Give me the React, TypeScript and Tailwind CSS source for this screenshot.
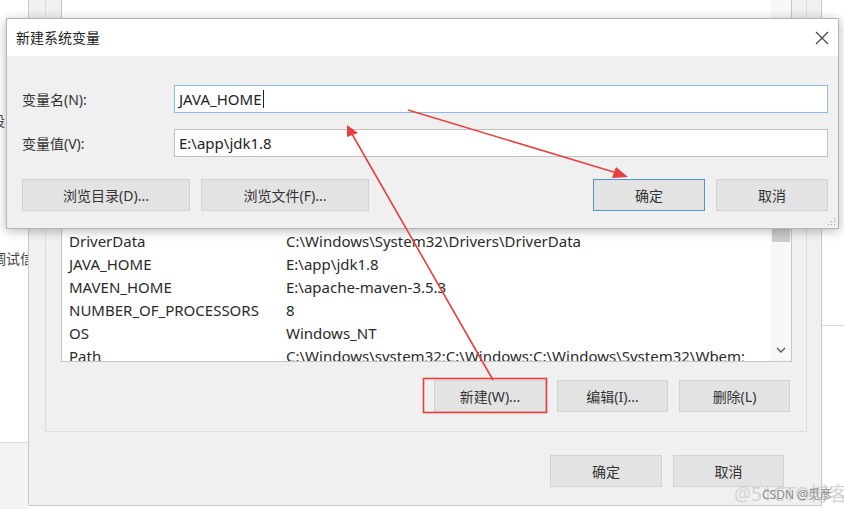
const envRows = [
  ['DriverData', 'C:\\Windows\\System32\\Drivers\\DriverData'],
  ['JAVA_HOME', 'E:\\app\\jdk1.8'],
  ['MAVEN_HOME', 'E:\\apache-maven-3.5.3'],
  ['NUMBER_OF_PROCESSORS', '8'],
  ['OS', 'Windows_NT'],
  ['Path', 'C:\\Windows\\system32;C:\\Windows;C:\\Windows\\System32\\Wbem;'],
];

function WinButton({ label, className = '', focused = false }: { label: string; className?: string; focused?: boolean }) {
  return (
    <div
      className={`h-[32px] flex items-center justify-center bg-[#e3e3e3] text-[14px] text-[#333] ${
        focused ? 'border-[1.5px] border-[#4a96dc]' : 'border border-[#d2d2d2]'
      } ${className}`}
    >
      {label}
    </div>
  );
}

function EnvDialog() {
  return (
    <div className="absolute left-[28px] top-0 w-[794px] h-[506px] bg-[#f0f0f0] border-x border-b border-[#c9c9c9] flex flex-col">
      {/* group box */}
      <div className="ml-[16px] w-[762px] h-[432px] border-x border-b border-[#dcdcdc] flex flex-col">
        <div className="ml-[15px] w-[731px] h-[362px] bg-white border-x border-b border-[#c6c6c6] flex overflow-hidden">
          <div className="flex-1 pt-[230px] pl-[7px] overflow-hidden">
            {envRows.map(([name, value]) => (
              <div key={name} className="h-[23px] flex items-center whitespace-nowrap text-[15px] text-[#2a2a2a]">
                <span className="w-[217px] shrink-0">{name}</span>
                <span>{value}</span>
              </div>
            ))}
          </div>
          <div className="w-[20px] shrink-0 bg-[#f7f7f7] flex flex-col justify-between">
            <div className="mt-[226px] mx-[1px] h-[16px] bg-[#cdcdcd]" />
            <div className="h-[22px] flex items-center justify-center">
              <svg width="10" height="6" viewBox="0 0 10 6">
                <path d="M1 1 L5 5 L9 1" fill="none" stroke="#555" strokeWidth="1.3" />
              </svg>
            </div>
          </div>
        </div>
        <div className="mt-[18px] flex justify-end gap-[11px] pr-[16px]">
          <WinButton label="新建(W)..." className="w-[112px]" />
          <WinButton label="编辑(I)..." className="w-[111px]" />
          <WinButton label="删除(L)" className="w-[111px]" />
        </div>
      </div>
      <div className="mt-[23px] flex justify-end gap-[11px] pr-[37px]">
        <WinButton label="确定" className="w-[112px]" />
        <WinButton label="取消" className="w-[111px]" />
      </div>
    </div>
  );
}

function NewVarDialog() {
  return (
    <div className="absolute left-[6px] top-[18px] w-[833px] h-[211px] bg-[#f0f0f0] border border-[#b5b5b5] shadow-[0_2px_10px_rgba(0,0,0,0.28)] flex flex-col">
      <div className="h-[37px] bg-white flex items-center justify-between pl-[9px] pr-[9px]">
        <span className="text-[14px] text-[#222]">新建系统变量</span>
        <svg width="14" height="14" viewBox="0 0 14 14">
          <path d="M1 1 L13 13 M13 1 L1 13" stroke="#444" strokeWidth="1.2" />
        </svg>
      </div>
      <div className="flex-1 flex flex-col pl-[15px] pr-[10px] pt-[29px]">
        <div className="flex items-center">
          <span className="w-[152px] text-[14px] text-[#333]">变量名(N):</span>
          <div className="flex-1 h-[28px] bg-white border border-[#8dbbe8] flex items-center pl-[4px] text-[15px] text-[#222]">
            JAVA_HOME
            <span className="ml-[1px] w-[1px] h-[18px] bg-[#222]" />
          </div>
        </div>
        <div className="mt-[16px] flex items-center">
          <span className="w-[152px] text-[14px] text-[#333]">变量值(V):</span>
          <div className="flex-1 h-[28px] bg-white border border-[#c2c2c2] flex items-center pl-[4px] text-[15px] text-[#222]">
            E:\app\jdk1.8
          </div>
        </div>
        <div className="mt-[22px] flex items-center gap-[11px]">
          <WinButton label="浏览目录(D)..." className="w-[168px]" />
          <WinButton label="浏览文件(F)..." className="w-[168px]" />
          <div className="flex-1" />
          <WinButton label="确定" className="w-[112px]" focused />
          <WinButton label="取消" className="w-[112px]" />
        </div>
      </div>
      <svg className="absolute right-[2px] bottom-[2px]" width="8" height="8" viewBox="0 0 8 8">
        <rect x="6" y="0" width="1" height="1" fill="#999" />
        <rect x="3" y="3" width="1" height="1" fill="#999" />
        <rect x="6" y="3" width="1" height="1" fill="#999" />
        <rect x="0" y="6" width="1" height="1" fill="#999" />
        <rect x="3" y="6" width="1" height="1" fill="#999" />
        <rect x="6" y="6" width="1" height="1" fill="#999" />
      </svg>
    </div>
  );
}

export default function App() {
  return (
    <div className="relative w-[844px] h-[509px] overflow-hidden bg-white font-['Noto_Sans','Noto_Sans_CJK_SC',sans-serif]">
      {/* window behind, left edge */}
      <div className="absolute left-0 top-0 w-[28px] h-[509px] flex flex-col overflow-hidden">
        <div className="h-[443px] bg-white border-b border-[#dadada] relative">
          <span className="absolute left-[-9px] top-[110px] text-[14px] text-[#444]">设</span>
          <span className="absolute left-[-8px] top-[248px] text-[14px] text-[#444] whitespace-nowrap">调试信息</span>
        </div>
        <div className="flex-1 bg-[#f3f3f3]" />
      </div>
      {/* window behind, right edge */}
      <div className="absolute left-[822px] top-0 w-[22px] h-[509px] flex flex-col">
        <div className="h-[326px] bg-white border-b border-[#dadada]" />
        <div className="flex-1 bg-white" />
      </div>

      <EnvDialog />
      <NewVarDialog />

      <svg className="absolute left-0 top-0 pointer-events-none" width="844" height="509" viewBox="0 0 844 509">
        <line x1="408" y1="110" x2="617" y2="173" stroke="#e8403d" strokeWidth="1.6" />
        <polygon points="628,177 612,178 616,167" fill="#e8403d" />
        <line x1="493" y1="380" x2="352" y2="134" stroke="#e8403d" strokeWidth="1.6" />
        <polygon points="347,125 358,133 347,137" fill="#e8403d" />
        <rect x="423.5" y="378.5" width="123" height="34" fill="none" stroke="#e8403d" strokeWidth="1.6" />
      </svg>

      <div className="absolute left-[734px] top-[480px] text-[19px] text-[#d3d3d3] whitespace-nowrap">@51CTO博客</div>
      <div className="absolute left-[762px] top-[486px] text-[12px] text-[#8a8a8a] whitespace-nowrap">CSDN @觅彦</div>
    </div>
  );
}
